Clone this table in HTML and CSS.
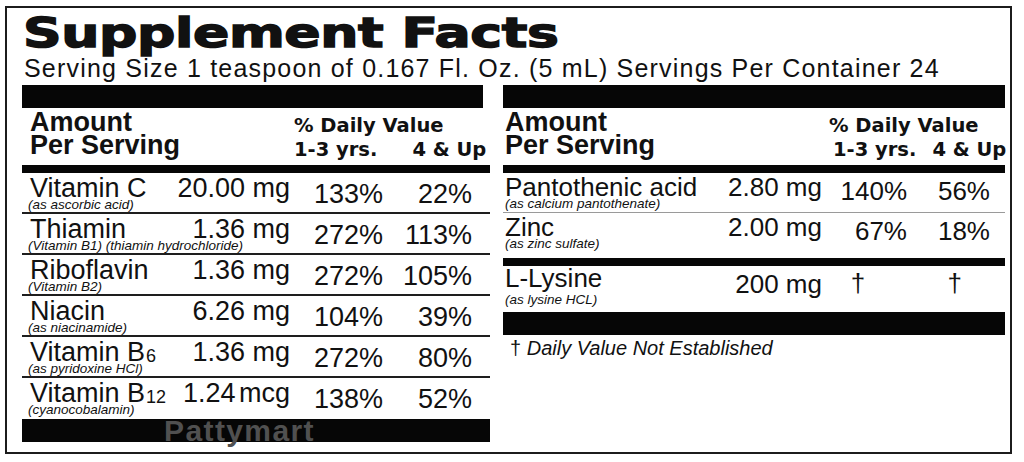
FILE: index.html
```html
<!DOCTYPE html>
<html lang="en">
<head>
<meta charset="utf-8">
<title>Supplement Facts</title>
<link rel="stylesheet" href="styles.css">
</head>
<body>
<div class="label">
  <h1 class="title">Supplement Facts</h1>
  <p class="serving">Serving Size 1 teaspoon of 0.167 Fl. Oz. (5 mL) Servings Per Container 24</p>
  <div class="panels">
    <section class="panel panel-left">
      <div class="bar bar-top"></div>
      <div class="head">
        <div class="head-amt">Amount<br>Per Serving</div>
        <div class="head-dv">
          <div>% Daily Value</div>
          <div class="dv-cols"><span>1-3 yrs.</span><span>4 &amp; Up</span></div>
        </div>
      </div>
      <div class="bar bar-thick"></div>
      <div class="row">
        <span class="name">Vitamin C</span><span class="amt">20.00 mg</span>
        <span class="sub">(as ascorbic acid)</span>
        <span class="p1">133%</span><span class="p2">22%</span>
      </div>
      <div class="row">
        <span class="name">Thiamin</span><span class="amt">1.36 mg</span>
        <span class="sub sub-wide">(Vitamin B1) (thiamin hydrochloride)</span>
        <span class="p1">272%</span><span class="p2">113%</span>
      </div>
      <div class="row">
        <span class="name">Riboflavin</span><span class="amt">1.36 mg</span>
        <span class="sub">(Vitamin B2)</span>
        <span class="p1">272%</span><span class="p2">105%</span>
      </div>
      <div class="row">
        <span class="name">Niacin</span><span class="amt">6.26 mg</span>
        <span class="sub">(as niacinamide)</span>
        <span class="p1">104%</span><span class="p2">39%</span>
      </div>
      <div class="row">
        <span class="name">Vitamin B<sub class="idx">6</sub></span><span class="amt">1.36 mg</span>
        <span class="sub">(as pyridoxine HCl)</span>
        <span class="p1">272%</span><span class="p2">80%</span>
      </div>
      <div class="row row-last">
        <span class="name">Vitamin B<sub class="idx">12</sub></span><span class="amt amt-tight">1.24<span class="thin"> </span>mcg</span>
        <span class="sub">(cyanocobalamin)</span>
        <span class="p1">138%</span><span class="p2">52%</span>
      </div>
      <div class="bar bar-bottom"><span class="wm">Pattymart</span></div>
    </section>

    <section class="panel panel-right">
      <div class="bar bar-top"></div>
      <div class="head">
        <div class="head-amt">Amount<br>Per Serving</div>
        <div class="head-dv">
          <div>% Daily Value</div>
          <div class="dv-cols"><span>1-3 yrs.</span><span>4 &amp; Up</span></div>
        </div>
      </div>
      <div class="bar bar-thick"></div>
      <div class="rrow rrow-first">
        <span class="name">Pantothenic acid</span><span class="amt">2.80 mg</span>
        <span class="sub">(as calcium pantothenate)</span>
        <span class="p1">140%</span><span class="p2">56%</span>
      </div>
      <div class="rrow rrow-zinc">
        <span class="name">Zinc</span><span class="amt">2.00 mg</span>
        <span class="sub">(as zinc sulfate)</span>
        <span class="p1">67%</span><span class="p2">18%</span>
      </div>
      <div class="bar bar-thick"></div>
      <div class="rrow rrow-lys">
        <span class="name">L-Lysine</span><span class="amt">200 mg</span>
        <span class="sub">(as lysine HCL)</span>
        <span class="p1 dag1">†</span><span class="p2 dag2">†</span>
      </div>
      <div class="bar bar-bottom"></div>
      <p class="note">† <em>Daily Value Not Established</em></p>
    </section>
  </div>
</div>
</body>
</html>
```

FILE: styles.css
```css
* { box-sizing: border-box; }

body {
  margin: 0;
  background: #ffffff;
  color: #111111;
  font-family: "Liberation Sans", Arial, sans-serif;
}

.label {
  width: 1007px;
  height: 448px;
  margin: 6px 0 0 5px;
  border: 2px solid #1c1c1c;
  padding-top: 5px;
}

.title {
  display: block;
  width: fit-content;
  margin: 0;
  padding-left: 12px;
  font-family: "DejaVu Sans", sans-serif;
  font-weight: bold;
  font-size: 40px;
  line-height: 40px;
  letter-spacing: -0.3px;
  white-space: nowrap;
  -webkit-text-stroke: 1.4px #111111;
  transform: scaleX(1.34);
  transform-origin: left center;
}

.serving {
  margin: 3px 0 0 17px;
  font-size: 25px;
  line-height: 24px;
  letter-spacing: 1.2px;
  white-space: nowrap;
}

.panels {
  display: grid;
  grid-template-columns: 469px 502px;
  column-gap: 13px;
  margin: 5px 0 0 14px;
}

.bar { background: #060606; }

.bar-top { height: 23px; }
.panel-left .bar-top { margin: 0 7px 0 1px; }

.bar-thick { height: 8px; }
.panel-left .bar-thick { margin-left: 1px; }

.bar-bottom { height: 23px; }
.panel-left .bar-bottom {
  margin-left: 1px;
  display: flex;
  padding-left: 142px;
}

.wm {
  font-weight: bold;
  font-size: 30px;
  line-height: 23px;
  color: #505050;
  letter-spacing: 1.4px;
}

.head {
  display: flex;
  height: 57px;
}

.head-amt {
  font-weight: bold;
  font-size: 27px;
  line-height: 23px;
  padding: 3px 0 0 9px;
  width: 273px;
  flex: none;
}
.panel-right .head-amt { width: 326px; padding-left: 2px; }

.head-dv {
  font-family: "DejaVu Sans", sans-serif;
  font-weight: bold;
  font-size: 19.5px;
  line-height: 24px;
  padding-top: 6px;
  white-space: nowrap;
}

.dv-cols { display: flex; gap: 35px; }
.panel-right .dv-cols { gap: 16px; padding-left: 4px; }

/* left rows */
.row {
  display: grid;
  grid-template-columns: 1fr auto 93px 89px;
  grid-template-rows: 22px auto;
  height: 41px;
  padding: 4px 18px 0 8px;
  margin-left: 1px;
  border-bottom: 2px solid #1e1e1e;
  font-size: 27px;
  line-height: 22px;
}
.row-last { border-bottom: 0; }

.name { grid-column: 1; grid-row: 1; white-space: nowrap; }
.amt { grid-column: 2; grid-row: 1; text-align: right; white-space: nowrap; }
.p1, .p2 { grid-row: 1 / 3; text-align: right; margin-top: 6px; white-space: nowrap; }
.p1 { grid-column: 3; }
.p2 { grid-column: 4; }

.sub {
  grid-column: 1 / 3;
  grid-row: 2;
  font-style: italic;
  font-size: 13.5px;
  line-height: 12px;
  margin-left: -2px;
  white-space: nowrap;
}

.idx {
  font-size: 18px;
  line-height: 0;
  vertical-align: -1px;
  margin-left: 1px;
}

.thin { letter-spacing: -4px; }

/* right rows */
.rrow {
  display: grid;
  grid-template-columns: 1fr auto 85px 83px;
  grid-template-rows: 22px auto;
  padding: 3px 15px 0 2px;
  font-size: 26px;
  line-height: 22px;
}
.rrow .p1, .rrow .p2 { margin-top: 4px; }
.rrow .sub { margin-left: 0; }

.rrow-first { height: 40px; border-bottom: 1px solid #9a9a9a; }
.rrow-zinc { height: 45px; }
.rrow-lys { height: 46px; padding-top: 1px; }
.rrow-lys .sub { margin-top: 5px; }
.rrow-lys .amt { margin-top: 6px; }
.rrow-lys .dag1 { text-align: center; padding-right: 13px; margin-top: 5px; }
.rrow-lys .dag2 { padding-right: 28px; margin-top: 5px; }

.note {
  margin: 2px 0 0 7px;
  font-size: 20px;
  line-height: 22px;
}
.note em { font-style: italic; }
```
